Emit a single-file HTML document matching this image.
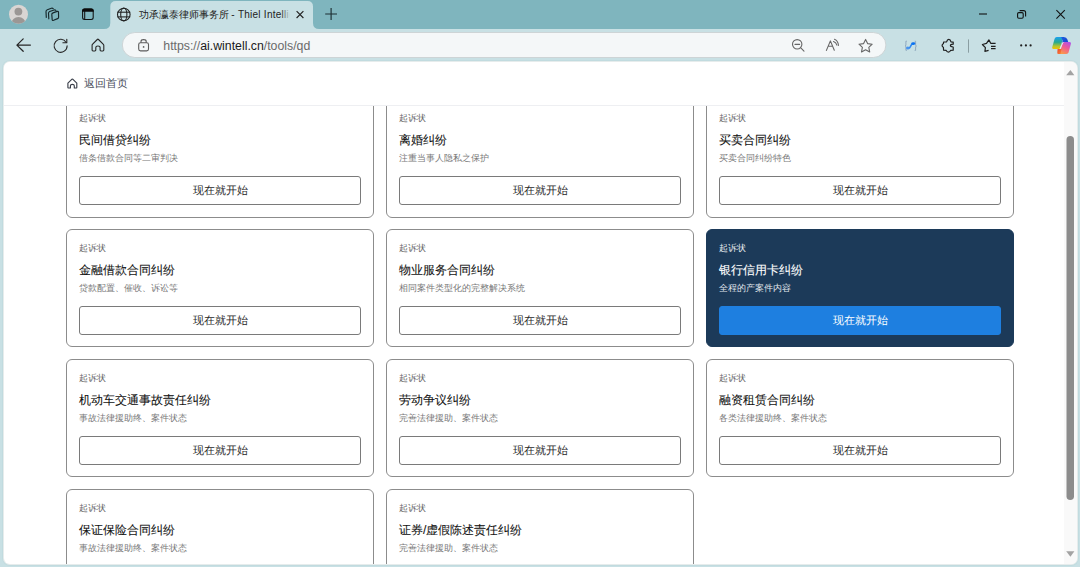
<!DOCTYPE html>
<html><head><meta charset="utf-8">
<style>
*{box-sizing:border-box}
html,body{margin:0;padding:0}
body{width:1080px;height:567px;overflow:hidden;position:relative;background:#c8e0e4;font-family:"Liberation Sans",sans-serif}
.abs{position:absolute}
#tabstrip{left:0;top:0;width:1080px;height:29px;background:#7fb5be}
#content{left:4px;top:62px;width:1073px;height:502px;background:#fff;border-radius:6px;overflow:hidden;box-shadow:0 0 0 1px #e6ecec,0 0 0 2px #c1dbdf}
#hdr{left:0;top:0;width:1060px;height:44px;background:#fff;border-bottom:1px solid #eeeff2;z-index:2}
.card{position:absolute;width:308px;height:118px;border:1px solid #8c8c8c;border-radius:6px;background:#fff}
.card .k{position:absolute;left:12px;top:12px;font-size:9px;line-height:12px;color:#666;white-space:nowrap}
.card .t{position:absolute;left:12px;top:31px;font-size:12.2px;line-height:18px;color:#111;font-weight:500;white-space:nowrap;-webkit-text-stroke:0.08px #111}
.card .d{position:absolute;left:12px;top:52px;font-size:9px;line-height:12px;color:#787878;white-space:nowrap}
.card .b{position:absolute;left:12px;top:76px;width:282px;height:29px;border:1px solid #7a7a7a;border-radius:3px;font-size:10.6px;line-height:27px;text-align:center;color:#2a2a2a}
.card.dark{background:#1c3a59;border-color:#1c3a59}
.card.dark .k{color:#e8ecf0}
.card.dark .t{color:#fff;-webkit-text-stroke:0.1px #fff}
.card.dark .d{color:#e0e6ec}
.card.dark .b{background:#1e7fe0;border-color:#1e7fe0;color:#fff}
#sb{left:1060px;top:0;width:13px;height:502px;background:#f9f9f9}
</style></head><body>
<div id="tabstrip" class="abs"></div>
<svg class="abs" style="left:0;top:0" width="1080" height="62" viewBox="0 0 1080 62">
  <defs><clipPath id="av"><circle cx="18.5" cy="14.3" r="9.5"/></clipPath>
  <linearGradient id="fade" x1="0" x2="1"><stop offset="0" stop-color="#c8e0e4" stop-opacity="0"/><stop offset="1" stop-color="#c8e0e4"/></linearGradient></defs>
  <!-- avatar -->
  <circle cx="18.5" cy="14.3" r="9.5" fill="#d9d5d3"/>
  <g clip-path="url(#av)" fill="#9b9795"><circle cx="18.4" cy="11.6" r="3.9"/><ellipse cx="18.5" cy="23.6" rx="7.2" ry="6.6"/></g>
  <!-- workspaces -->
  <g fill="none" stroke="#16282c" stroke-width="1.15" stroke-linejoin="round" stroke-linecap="round">
    <path d="M46.3 17.4 L46 11.6 Q45.9 10.2 47.3 9.7 L51.4 8.2 Q52.5 7.9 53.2 8.7"/>
    <path d="M48.8 18.8 L48.5 13.4 Q48.4 12 49.7 11.5 L54 10 Q55.2 9.6 55.9 10.5"/>
    <path d="M52.2 19.8 L51.8 14.6 Q51.7 13.3 53 12.9 L57.2 11.4 Q58.5 11 58.5 12.4 L58.6 17.2 Q58.6 18.2 57.6 18.6 L53.6 20.3 Q52.3 20.8 52.2 19.8 Z"/>
  </g>
  <!-- vertical tabs -->
  <rect x="82.6" y="8.9" width="10.6" height="10.6" rx="2" fill="none" stroke="#111" stroke-width="1.05"/>
  <path d="M82.1 11.8 V10.8 Q82.1 8.4 84.5 8.4 H91.3 Q93.7 8.4 93.7 10.8 V11.8 Z" fill="#0a0a0a"/>
  <line x1="84.7" y1="11" x2="84.7" y2="19.6" stroke="#111" stroke-width="1.05"/>
  <!-- tab -->
  <path d="M104 29 Q110.3 29 110.3 23 L110.3 6.5 Q110.3 1 116 1 L307.5 1 Q313 1 313 6.5 L313 23 Q313 29 319.3 29 Z" fill="#c8e0e4"/>
  <!-- globe -->
  <g fill="none" stroke="#222" stroke-width="1.1"><circle cx="123.8" cy="14.5" r="6.3"/><ellipse cx="123.8" cy="14.5" rx="3.1" ry="6.4"/><line x1="117.4" y1="12.2" x2="130.2" y2="12.2"/><line x1="117.4" y1="16.9" x2="130.2" y2="16.9"/></g>
  <clipPath id="tclip"><rect x="130" y="0" width="160" height="28"/></clipPath><text clip-path="url(#tclip)" x="138.5" y="18.2" font-family="Liberation Sans, sans-serif" font-size="10.1" fill="#222">功承瀛泰律师事务所 <tspan font-size="10" letter-spacing="0.25">- Thiel Intelligence</tspan></text>
  <rect x="281" y="4" width="9" height="20" fill="url(#fade)"/>
    <path d="M296.6 11.2 L303.4 18 M303.4 11.2 L296.6 18" stroke="#222" stroke-width="1.15"/>
  <path d="M325.2 14 H337 M331.1 8.1 V19.9" stroke="#1d2f33" stroke-width="1.15"/>
  <!-- window controls -->
  <path d="M979 14 H987" stroke="#111" stroke-width="1.1"/>
  <g fill="none" stroke="#111" stroke-width="1.1"><rect x="1017.6" y="12.6" width="5.6" height="5.6" rx="1.2"/><path d="M1019.6 10.6 H1023.6 Q1025.6 10.6 1025.6 12.6 V16.4"/></g>
  <path d="M1056.4 10.2 L1064.8 18.6 M1064.8 10.2 L1056.4 18.6" stroke="#111" stroke-width="1.1"/>
  <!-- toolbar -->
  <path d="M23.2 38.9 L16.9 45.1 L23.2 51.3 M17.2 45.1 H30.4" fill="none" stroke="#262626" stroke-width="1.25" stroke-linecap="round" stroke-linejoin="round"/>
  <path d="M66.2 42.5 A6.5 6.5 0 1 0 67.1 45.9" fill="none" stroke="#262626" stroke-width="1.1" stroke-linecap="round"/>
  <path d="M66.8 39.3 V42.8 H62.9" fill="none" stroke="#262626" stroke-width="1.1" stroke-linecap="round" stroke-linejoin="round"/>
  <path d="M92.4 44.4 L97.3 39.5 Q97.9 38.9 98.5 39.5 L103.4 44.4 Q103.8 44.8 103.8 45.4 V50.1 Q103.8 51 102.9 51 H101 Q100.1 51 100.1 50.1 V47.6 Q100.1 46 97.9 46 Q95.8 46 95.8 47.6 V50.1 Q95.8 51 94.9 51 H93 Q92.1 51 92.1 50.1 V45.4 Q92.1 44.8 92.4 44.4 Z" fill="none" stroke="#262626" stroke-width="1.1" stroke-linejoin="round"/>
  <rect x="122.3" y="32.5" width="763.6" height="25" rx="12.5" fill="#f4f7f8" stroke="#cdd4d6" stroke-width="1"/>
  <g fill="none" stroke="#5c5c5c" stroke-width="1.1"><rect x="138.7" y="42.7" width="9.8" height="8.2" rx="1.8"/><path d="M141 42.7 V41.4 Q141 39.6 143.6 39.6 Q146.2 39.6 146.2 41.4 V42.7"/></g>
  <circle cx="143.6" cy="46.9" r="0.85" fill="#5c5c5c"/>
  <text x="163.3" y="50" font-family="Liberation Sans, sans-serif" font-size="12.3" fill="#6b6b6b">https://<tspan fill="#1a1a1a">ai.wintell.cn</tspan>/tools/qd</text>
  <g fill="none" stroke="#666" stroke-width="1.1" stroke-linecap="round"><circle cx="797.2" cy="44.3" r="4.7"/><path d="M795 44.4 H799.6 M800.8 47.9 L804 51.1"/></g>
  <path d="M826.4 50.4 L830.4 40.9 L834.3 50.2 M828.3 46.3 H832.7" fill="none" stroke="#666" stroke-width="1.1" stroke-linecap="round" stroke-linejoin="round"/>
  <path d="M833.5 41.5 Q836.2 42.6 836.9 45.2 M834.5 39.3 Q838 40.8 838.5 45.4" fill="none" stroke="#666" stroke-width="1.05" stroke-linecap="round"/>
  <path d="M865.6 39.4 L867.6 43.6 L872.2 44.2 L868.8 47.4 L869.7 51.9 L865.6 49.7 L861.5 51.9 L862.4 47.4 L859 44.2 L863.6 43.6 Z" fill="none" stroke="#666" stroke-width="1.1" stroke-linejoin="round"/>
  <!-- blue wave ext -->
  <path d="M906.9 41.2 H905.9 V45.3 L905 45.9 L905.9 46.5 V50.3 H906.9 M914.7 41.2 H915.6 V45.4 L916.5 46 L915.6 46.6 V50.4 H914.7" fill="none" stroke="#8ea6bd" stroke-width="0.95"/>
  <path d="M907.8 48.2 Q909.8 48.4 910.6 46.2 Q911.4 43.8 913.2 43.6" fill="none" stroke="#2a86f2" stroke-width="1.6" stroke-linecap="round"/>
  <ellipse cx="913.3" cy="43.6" rx="2.1" ry="1.45" fill="#0a72f0"/><ellipse cx="907.8" cy="48.1" rx="1.8" ry="1.5" fill="#4894ee"/>
  <!-- puzzle -->
  <path d="M943.6 42 L946.6 41.8 Q947.2 39.4 948.8 39.4 Q950.4 39.4 951 41.8 L953.2 42.2 L953.2 44.2 Q950.4 44.4 950.4 45.6 Q950.4 46.8 953.2 47 L953.2 50.2 L950.6 50.4 Q950 52.1 948.4 52.1 Q946.8 52.1 946.2 50.4 L943.6 50.2 L943.4 47.2 Q942.1 46.8 942.1 45.5 Q942.1 44.2 943.4 43.8 Z" fill="none" stroke="#1f1f1f" stroke-width="1.2" stroke-linejoin="round"/>
  <line x1="968.5" y1="39.4" x2="968.5" y2="52.7" stroke="#8a9ea2" stroke-width="1"/>
  <!-- favorites -->
  <path d="M988.6 50.3 L984.9 51.3 L985.4 47.6 L982.4 44.5 L986.5 43.4 L988.9 39.9 L990.7 43.3 H995.6 M991 46.3 H995.6 M991 48.6 H995.6" fill="none" stroke="#1f1f1f" stroke-width="1.2" stroke-linejoin="round"/>
  <g fill="#1f1f1f"><circle cx="1021.2" cy="45.4" r="1.1"/><circle cx="1025.9" cy="45.4" r="1.1"/><circle cx="1030.6" cy="45.4" r="1.1"/></g>
  <!-- copilot -->
  <defs>
    <linearGradient id="cpA" x1="0" y1="0" x2="0" y2="1"><stop offset="0" stop-color="#1aa0f2"/><stop offset="0.45" stop-color="#27a98e"/><stop offset="0.78" stop-color="#b7c52c"/><stop offset="1" stop-color="#f2c200"/></linearGradient>
    <linearGradient id="cpB" x1="0.8" y1="0" x2="0.3" y2="1"><stop offset="0" stop-color="#b050e8"/><stop offset="0.45" stop-color="#ee5898"/><stop offset="1" stop-color="#fb9a48"/></linearGradient>
    <linearGradient id="cpC" x1="0" y1="0" x2="1" y2="1"><stop offset="0" stop-color="#1d5fe0"/><stop offset="1" stop-color="#1a3cc8"/></linearGradient>
    <linearGradient id="cpD" x1="0" y1="0" x2="1" y2="1"><stop offset="0" stop-color="#f04a2a"/><stop offset="1" stop-color="#f7813a"/></linearGradient>
  </defs>
  <path d="M1056.8 36.9 L1063.6 36.9 L1059.6 48.9 L1053.4 48.9 Q1051.8 48.9 1052.2 47.2 L1054.6 38.8 Q1055.1 36.9 1056.8 36.9 Z" fill="url(#cpA)"/>
  <path d="M1061.2 36.9 L1063.8 36.9 Q1066.6 36.9 1067.4 39.4 L1068.2 42 L1063.6 42 Q1062.6 42 1062.2 43.4 L1061.2 46.6 L1062.6 40.4 Z" fill="url(#cpC)"/>
  <path d="M1064.6 42 L1069.6 42 Q1071.3 42 1070.9 43.8 L1068.6 52.2 Q1068.1 54 1066.4 54 L1059.4 54 L1062.4 43.6 Q1062.9 42 1064.6 42 Z" fill="url(#cpB)"/>
  <path d="M1057.6 48.9 L1061.6 48.9 L1060.4 54 L1058.6 54 Q1057 54 1057.3 52.4 Z" fill="url(#cpD)"/>
  <path d="M1062.9 42.6 L1060.2 48.6" stroke="#e8f1f3" stroke-width="0.9" stroke-linecap="round"/>
</svg>

<div id="content" class="abs">
  <div class="card" style="left:62px;top:37px;height:119px"><div class="k">起诉状</div><div class="t">民间借贷纠纷</div><div class="d">借条借款合同等二审判决</div><div class="b">现在就开始</div></div>
  <div class="card" style="left:382px;top:37px;height:119px"><div class="k">起诉状</div><div class="t">离婚纠纷</div><div class="d">注重当事人隐私之保护</div><div class="b">现在就开始</div></div>
  <div class="card" style="left:702px;top:37px;height:119px"><div class="k">起诉状</div><div class="t">买卖合同纠纷</div><div class="d">买卖合同纠纷特色</div><div class="b">现在就开始</div></div>
  <div class="card" style="left:62px;top:167px"><div class="k">起诉状</div><div class="t">金融借款合同纠纷</div><div class="d">贷款配置、催收、诉讼等</div><div class="b">现在就开始</div></div>
  <div class="card" style="left:382px;top:167px"><div class="k">起诉状</div><div class="t">物业服务合同纠纷</div><div class="d">相同案件类型化的完整解决系统</div><div class="b">现在就开始</div></div>
  <div class="card dark" style="left:702px;top:167px"><div class="k">起诉状</div><div class="t">银行信用卡纠纷</div><div class="d">全程的产案件内容</div><div class="b">现在就开始</div></div>
  <div class="card" style="left:62px;top:297px"><div class="k">起诉状</div><div class="t">机动车交通事故责任纠纷</div><div class="d">事故法律援助终、案件状态</div><div class="b">现在就开始</div></div>
  <div class="card" style="left:382px;top:297px"><div class="k">起诉状</div><div class="t">劳动争议纠纷</div><div class="d">完善法律援助、案件状态</div><div class="b">现在就开始</div></div>
  <div class="card" style="left:702px;top:297px"><div class="k">起诉状</div><div class="t">融资租赁合同纠纷</div><div class="d">各类法律援助终、案件状态</div><div class="b">现在就开始</div></div>
  <div class="card" style="left:62px;top:427px"><div class="k">起诉状</div><div class="t">保证保险合同纠纷</div><div class="d">事故法律援助终、案件状态</div><div class="b">现在就开始</div></div>
  <div class="card" style="left:382px;top:427px"><div class="k">起诉状</div><div class="t">证券/虚假陈述责任纠纷</div><div class="d">完善法律援助、案件状态</div><div class="b">现在就开始</div></div>
  <div id="hdr" class="abs">
    <svg class="abs" style="left:62px;top:15px" width="14" height="14" viewBox="0 0 14 14"><path d="M1.9 6.2 L6 2.2 Q6.35 1.9 6.7 2.2 L10.8 6.2 V10.6 Q10.8 11 10.4 11 H8.3 V8.7 Q8.3 7.4 6.35 7.4 Q4.4 7.4 4.4 8.7 V11 H2.3 Q1.9 11 1.9 10.6 Z" fill="none" stroke="#3a3f4a" stroke-width="1.15" stroke-linejoin="round"/></svg>
    <div class="abs" style="left:80.2px;top:14.4px;font-size:10.5px;line-height:14px;color:#474d5a;white-space:nowrap">返回首页</div>
  </div>
  <div id="sb" class="abs">
    <svg class="abs" style="left:0;top:0" width="13" height="502" viewBox="0 0 13 502"><path d="M2.2 13.2 L6.4 8 L10.4 13.2 Z" fill="#a3a3a3"/><path d="M2.2 489.2 L6.4 494.8 L10.4 489.2 Z" fill="#a3a3a3"/><rect x="2.5" y="74" width="7.5" height="364" rx="3.75" fill="#8c8c8c"/></svg>
  </div>
</div>

</body></html>
